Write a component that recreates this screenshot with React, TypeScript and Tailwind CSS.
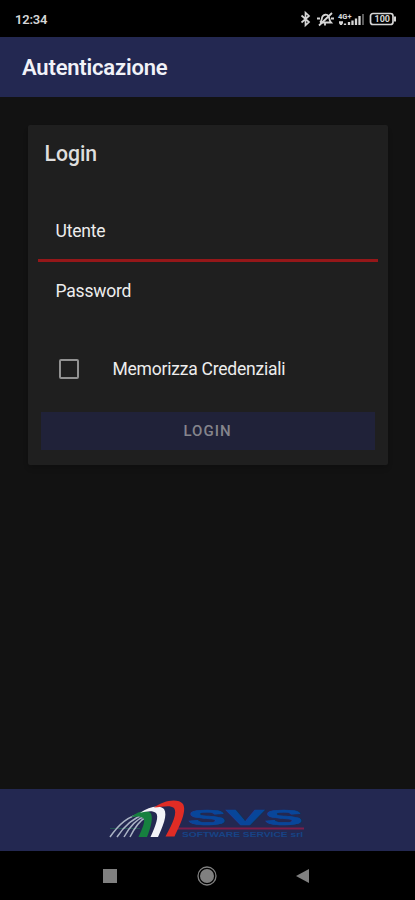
import { useState } from "react";

function StatusBar() {
  return (
    <header className="h-[37px] shrink-0 bg-black flex items-center justify-between pl-[15px] pr-[18px] pt-[1px] text-[#d6d6d6]">
      <span className="text-[13px] font-semibold leading-none tracking-[-0.2px]">12:34</span>
      <svg width="97" height="18" viewBox="0 0 97 18" fill="none" stroke="currentColor">
        {/* Bluetooth */}
        <path d="M1.500 5.500 9 12 5.500 15.300V2.700L9 6 1.500 12.500" strokeWidth="1.700" />
        {/* Silenzioso */}
        <path d="M20 12.500c2-1.500 1.500-4 2.500-6 1-2 4.500-2.500 6-.5 1.200 2 .5 4.500 2.500 6.500H20M25 13v2.500" strokeWidth="1.800" />
        <path d="M19 15.500 32 3M17 8.500h3M31 8.500h3" strokeWidth="1.800" />
        {/* Segnale */}
        <path d="M39 12.500h4M41 15v-3M45 15v-1.500M49 15v-3M52.500 15V10.500M56 15V8.500M59.500 15V6" strokeWidth="2.300" />
        <path d="M63 15V4" strokeWidth="1.800" stroke="#666" />
        <text x="38" y="8.500" fontSize="7.500" fontWeight="800" fill="currentColor" stroke="none">4G+</text>
        {/* Batteria */}
        <rect x="70.500" y="3.500" width="22.500" height="11" rx="2.500" strokeWidth="1.700" />
        <path d="M95 6.500v5" strokeWidth="2" />
        <text x="74.500" y="12.300" fontSize="9" fontWeight="700" fill="currentColor" stroke="none">100</text>
      </svg>
    </header>
  );
}

function Logo() {
  return (
    <svg width="200" height="48" viewBox="0 0 200 48" fill="none">
      <path d="M2 32.500H32" stroke="#236653" strokeWidth="0.700" />
      <path d="M68 32.500H196" stroke="#7b1e4b" strokeWidth="1.800" />
      {/* Scie */}
      <g stroke="#aab3c4" strokeWidth="1.500">
        <path d="M2 41C11 28 20 20 34 17.500" />
        <path d="M9 41C17 29 25 22 36 18.500" />
        <path d="M16 41C22 30 29 23 37 20" />
        <path d="M22 41C27 31 31 25 38 21" />
      </g>
      {/* Archi tricolore */}
      <path d="M23 21C30 15 39 13 42.500 17 45.500 21 43 31 39 41H30.500C35 31 37.500 25 35.500 22.500 33 20 28 20.500 23 21Z" fill="#16803f" />
      <path d="M32 17C41 10 52 8.500 56 13 60 19 54.500 31 50 41H42.500C48 29 51 20.500 48 17 44.500 14 38 15.500 32 17Z" fill="#f2f3f8" />
      <path d="M46 11.500C55 4.500 70 1.500 75 8 79 15 72 29 66.500 40.500H57.500C65 27 69.500 16.500 66 12 62 8.500 54 11 46 11.500Z" fill="#e02c25" />
      <text x="80" y="29" fontSize="22.500" fontWeight="700" fill="#08469a" stroke="#08469a" strokeWidth="0.600" fontFamily="Liberation Sans" textLength="115" lengthAdjust="spacingAndGlyphs">SVS</text>
      <text x="74" y="41" fontSize="7" fontWeight="700" fill="#174385" fontFamily="Liberation Sans" textLength="121" lengthAdjust="spacingAndGlyphs">SOFTWARE SERVICE srl</text>
    </svg>
  );
}

function LoginCard() {
  const [memorizza, setMemorizza] = useState(false);

  return (
    <section className="mx-auto mt-7 w-[360px] h-[340px] rounded-[2px] bg-[#1f1f1f] shadow-md px-2.5 flex flex-col">
      <h2 className="mt-[15px] pl-[7px] text-[21.2px] leading-7 font-medium text-[#dedede]">Login</h2>
      {/* Campi */}
      <div className="mt-[39px] h-[55px] pl-[18px] pt-[12px] border-b-[3px] border-[#951719] text-[17.5px] leading-6 tracking-[-0.2px] text-[#ededed]">
        Utente
      </div>
      <div className="h-[59px] pl-[18px] pt-[17px] text-[17.5px] leading-6 tracking-[-0.2px] text-[#ededed]">Password</div>
      <label className="mt-[36px] h-6 pl-[21px] flex items-center gap-[34px] text-[17.5px] tracking-[-0.22px] text-[#ededed]">
        <input
          type="checkbox"
          checked={memorizza}
          onChange={(e) => setMemorizza(e.target.checked)}
          className="appearance-none size-5 rounded-[2px] border-2 border-[#929292] checked:bg-[#929292]"
        />
        Memorizza Credenziali
      </label>
      <button className="mt-[31px] mx-[3px] h-[38px] bg-[#202239] text-[15px] font-medium tracking-[1px] text-[#85858c]" disabled>
        LOGIN
      </button>
    </section>
  );
}

function App() {
  return (
    <div className="h-screen flex flex-col bg-[#121212] font-['Roboto',sans-serif]">
      <StatusBar />
      <div className="h-[60px] shrink-0 bg-[#232851] flex items-center pl-[22px]">
        <h1 className="text-[22px] font-semibold tracking-[-0.2px] text-[#f1f2f8]">Autenticazione</h1>
      </div>
      <main className="flex-1">
        <LoginCard />
      </main>
      <footer className="h-[62px] shrink-0 bg-[#232851] flex items-center justify-center">
        <Logo />
      </footer>
      {/* Barra di navigazione */}
      <nav className="h-[49px] shrink-0 bg-black flex items-center justify-between pl-[103px] pr-[106px] text-[#808080]">
        <span className="size-3.5 bg-current" />
        <svg width="20" height="20" viewBox="0 0 20 20" fill="none">
          <circle cx="10" cy="10" r="9" stroke="currentColor" strokeWidth="1.300" />
          <circle cx="10" cy="10" r="7" fill="currentColor" />
        </svg>
        <svg width="13" height="14" viewBox="0 0 13 14">
          <path d="M13 0v14L0 7Z" fill="currentColor" />
        </svg>
      </nav>
    </div>
  );
}

export default App;
